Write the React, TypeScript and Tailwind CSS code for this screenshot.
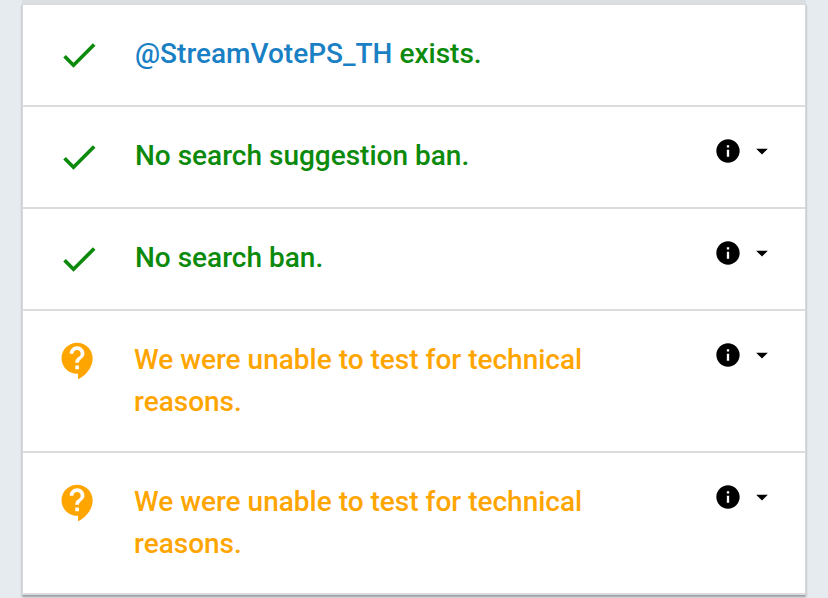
import { MdCheck, MdInfo, MdArrowDropDown } from "react-icons/md";

type Result = {
  id: string;
  status: "ok" | "unknown";
  text: string;
  user?: string;
  hasInfo: boolean;
};

const results: Result[] = [
  { id: "profile", status: "ok", user: "@StreamVotePS_TH", text: "exists.", hasInfo: false },
  { id: "typeahead", status: "ok", text: "No search suggestion ban.", hasInfo: true },
  { id: "search", status: "ok", text: "No search ban.", hasInfo: true },
  { id: "ghost", status: "unknown", text: "We were unable to test for technical reasons.", hasInfo: true },
  { id: "reply", status: "unknown", text: "We were unable to test for technical reasons.", hasInfo: true },
];

function QuestionIcon({ className }: { className: string }) {
  return (
    <svg viewBox="0 0 24 24" fill="currentColor" className={className} aria-hidden="true">
      <path d="M11.5 2C6.81 2 3 5.81 3 10.5S6.81 19 11.5 19h.5v3c4.86-2.34 8-7 8-11.5C20 5.81 16.19 2 11.5 2zm1 14.5h-2v-2h2v2zm0-3.5h-2c0-3.25 3-3 3-5 0-1.1-.9-2-2-2s-2 .9-2 2h-2c0-2.21 1.79-4 4-4s4 1.79 4 4c0 2.5-3 2.75-3 5z" />
    </svg>
  );
}

function ResultRow({ result }: { result: Result }) {
  const ok = result.status === "ok";

  return (
    <li className={`flex items-start border-b-2 border-[#dadcde] py-7 pr-[29px] ${ok ? "pl-[34px]" : "pl-[33px]"}`}>
      <div className="w-[78px] shrink-0">
        {ok ? (
          <MdCheck className="size-11 text-[#0b8a0b]" />
        ) : (
          <QuestionIcon className="size-11 text-[#ffa500]" />
        )}
      </div>
      <p className={`min-w-0 flex-1 text-[28px] leading-[42px] font-medium ${ok ? "text-[#0b8a0b]" : "text-[#ffa500]"}`}>
        {result.user && (
          <>
            <a href="#" className="text-[#1a80c4]">{result.user}</a>{" "}
          </>
        )}
        {result.text}
      </p>
      {result.hasInfo && (
        <button type="button" aria-label="More information" className="ml-16 mt-0.5 flex shrink-0 items-center gap-1.5 text-black">
          <MdInfo className="size-7" />
          <MdArrowDropDown className="size-7" />
        </button>
      )}
    </li>
  );
}

export default function App() {
  return (
    <main className="min-h-screen bg-[#e6ebf0] px-[22px] font-[Roboto,sans-serif]">
      <div className="h-[3px] bg-[#dadfe3]" />
      <ul className="border-x border-t-2 border-[#dadcde] border-x-[#d5d9dc] bg-white shadow-[0_2px_2px_#9a9ca0]">
        {results.map((result) => (
          <ResultRow key={result.id} result={result} />
        ))}
      </ul>
    </main>
  );
}
